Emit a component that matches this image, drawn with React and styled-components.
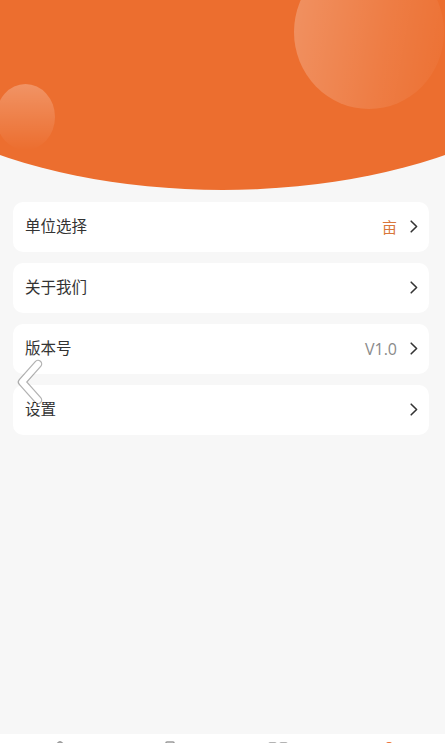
import React from 'react';
import styled, { createGlobalStyle } from 'styled-components';
import { House, ClipboardList, LayoutGrid, User } from 'lucide-react';

const GlobalStyle = createGlobalStyle`
    html, body {
        margin: 0;
        padding: 0;
        overflow: hidden;
        background: #f7f7f7;
        font-family: "Noto Sans CJK SC", "Noto Sans", sans-serif;
    }
`;

const Page = styled.div`
    position: relative;
    width: 445px;
    background: #f7f7f7;
`;

const Main = styled.div`
    height: 734px;
    display: flex;
    flex-direction: column;
`;

const Header = styled.div`
    position: relative;
    height: 190px;
    background: #ec6e2f;
    clip-path: ellipse(86.5% 190px at 50% 0);
    overflow: hidden;
`;

const Bubble = styled.div`
    position: absolute;
    border-radius: 50%;
`;

const BigBubble = styled(Bubble)`
    left: 294px;
    top: -45px;
    width: 150px;
    height: 154px;
    background: linear-gradient(100deg, rgba(255, 255, 255, 0.25) 0%, rgba(255, 255, 255, 0.1) 60%, rgba(255, 255, 255, 0.02) 100%);
`;

const SmallBubble = styled(Bubble)`
    left: -4px;
    top: 84px;
    width: 59px;
    height: 66px;
    background: linear-gradient(180deg, rgba(255, 255, 255, 0.26) 0%, rgba(255, 255, 255, 0.08) 70%, rgba(255, 255, 255, 0) 100%);
`;

const List = styled.div`
    display: flex;
    flex-direction: column;
    gap: 11px;
    padding: 12px 16px 0 13px;
`;

const Card = styled.div`
    height: 50px;
    display: flex;
    align-items: center;
    justify-content: space-between;
    padding: 0 11px 0 12px;
    background: #fff;
    border-radius: 10px;
`;

const Label = styled.span`
    font-size: 15.5px;
    line-height: 1;
    margin-top: -2px;
    color: #333;
`;

const Right = styled.div`
    display: flex;
    align-items: center;
    gap: 13px;
    margin-top: -1px;
`;

const Value = styled.span`
    font-size: ${p => (p.$accent ? '15px' : '16px')};
    color: ${p => (p.$accent ? '#d9773a' : '#8a8a8a')};
    font-family: ${p => (p.$accent ? '"Noto Sans CJK SC", sans-serif' : '"Open Sans", "Noto Sans", sans-serif')};
`;

const Chevron = () => (
    <svg width="8" height="13" viewBox="0 0 8 13">
        <path d="M1.2 1.2 L6.6 6.5 L1.2 11.8" fill="none" stroke="#333" strokeWidth="1.6" strokeLinecap="round" strokeLinejoin="round" />
    </svg>
);

const BackArrow = styled.svg`
    position: absolute;
    left: 13px;
    top: 358px;
`;

const TabBar = styled.div`
    height: 56px;
    display: grid;
    grid-template-columns: repeat(4, 1fr);
    background: #fff;
`;

const Tab = styled.div`
    display: flex;
    justify-content: center;
    padding-top: 6px;
    padding-left: ${p => p.$shift || 0}px;
    color: ${p => (p.$active ? '#ec6e2f' : '#9a9a9a')};
`;

const items = [
    { label: '单位选择', value: '亩', accent: true },
    { label: '关于我们' },
    { label: '版本号', value: 'V1.0' },
    { label: '设置' },
];

const App = () => {
    return (
        <Page>
            <GlobalStyle />
            <Main>
                <Header>
                    <BigBubble />
                    <SmallBubble />
                </Header>
                <List>
                    {items.map(item => (
                        <Card key={item.label}>
                            <Label>{item.label}</Label>
                            <Right>
                                {item.value && <Value $accent={item.accent}>{item.value}</Value>}
                                <Chevron />
                            </Right>
                        </Card>
                    ))}
                </List>
            </Main>
            <TabBar>
                <Tab $shift={8}><House size={24} strokeWidth={1.6} /></Tab>
                <Tab $shift={6}><ClipboardList size={24} strokeWidth={1.6} /></Tab>
                <Tab $shift={-8}><LayoutGrid size={24} strokeWidth={1.6} /></Tab>
                <Tab $active><User size={24} strokeWidth={1.8} /></Tab>
            </TabBar>
            <BackArrow width="34" height="48" viewBox="0 0 34 48">
                <path d="M25 6 L9 24 L25 42" fill="none" stroke="rgba(0,0,0,0.3)" strokeWidth="8.5" strokeLinecap="round" strokeLinejoin="round" />
                <path d="M25 6 L9 24 L25 42" fill="none" stroke="#fff" strokeWidth="6" strokeLinecap="round" strokeLinejoin="round" />
            </BackArrow>
        </Page>
    );
};

export default App;
